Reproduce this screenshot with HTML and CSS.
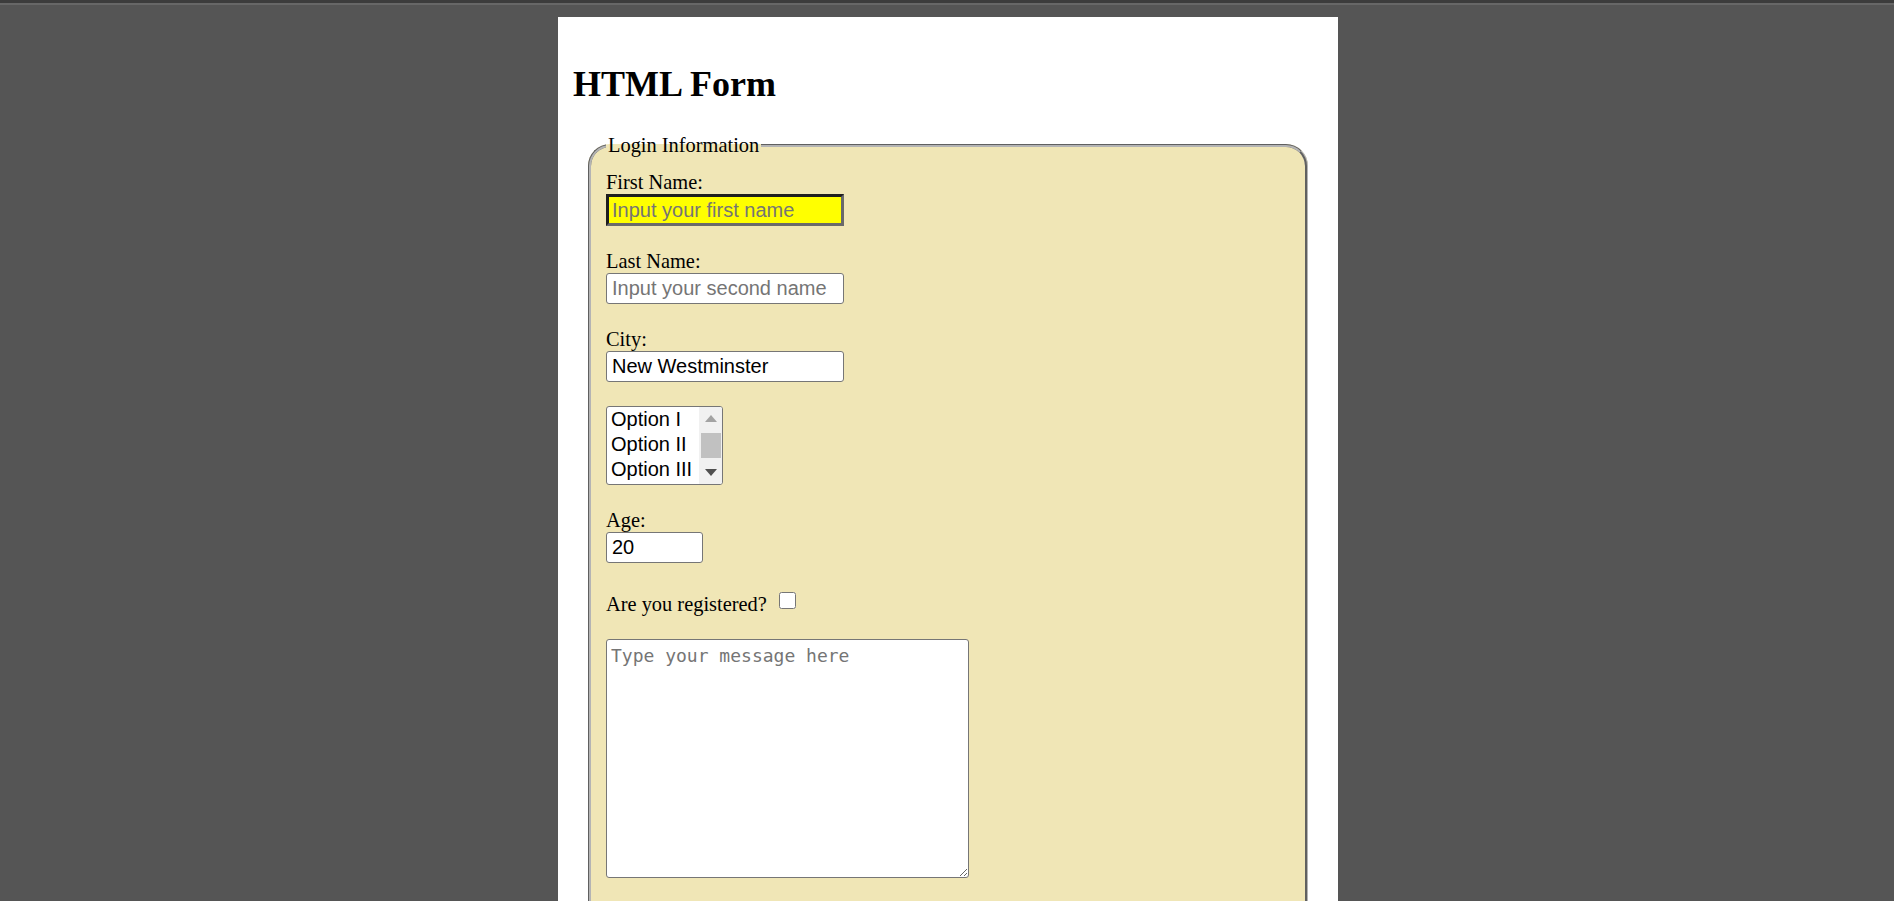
FILE: index.html
```html
<!DOCTYPE html>
<html lang="en">
<head>
<meta charset="utf-8">
<title>HTML Form</title>
<link rel="stylesheet" href="styles.css">
</head>
<body>
<div class="topbar"></div>
<main class="page">
  <h1 class="title">HTML Form</h1>
  <form class="form">
    <fieldset class="login">
      <legend class="legend">Login Information</legend>
      <div class="field">
        <label class="label" for="first">First Name:</label>
        <input class="text text-first" id="first" type="text" placeholder="Input your first name">
      </div>
      <div class="field">
        <label class="label" for="last">Last Name:</label>
        <input class="text" id="last" type="text" placeholder="Input your second name">
      </div>
      <div class="field">
        <label class="label" for="city">City:</label>
        <input class="text" id="city" type="text" value="New Westminster">
      </div>
      <div class="field">
        <div class="listbox" role="listbox" aria-label="Options">
          <div class="listbox-options">
            <div class="listbox-option" role="option">Option I</div>
            <div class="listbox-option" role="option">Option II</div>
            <div class="listbox-option" role="option">Option III</div>
          </div>
          <div class="scrollbar" aria-hidden="true">
            <div class="sb-btn">
              <svg class="sb-arrow" width="12" height="7" viewBox="0 0 12 7"><polygon points="0,7 12,7 6,0" fill="#a3a3a3"/></svg>
            </div>
            <div class="sb-track"><div class="sb-thumb"></div></div>
            <div class="sb-btn">
              <svg class="sb-arrow" width="12" height="7" viewBox="0 0 12 7"><polygon points="0,0 12,0 6,7" fill="#505050"/></svg>
            </div>
          </div>
        </div>
      </div>
      <div class="field">
        <label class="label" for="age">Age:</label>
        <input class="text text-age" id="age" type="number" value="20">
      </div>
      <div class="field field-check">
        <label class="label label-inline" for="reg">Are you registered?</label>
        <input class="check" id="reg" type="checkbox">
      </div>
      <div class="field">
        <textarea class="message" placeholder="Type your message here"></textarea>
      </div>
    </fieldset>
  </form>
</main>
</body>
</html>
```

FILE: styles.css
```css
html, body {
  margin: 0;
  padding: 0;
  background: #555555;
  height: 100%;
  overflow: hidden;
}

body {
  font-family: "Liberation Serif", "Times New Roman", serif;
  font-size: 20.4px;
  color: #000;
}

.topbar {
  height: 3px;
  background: #3c3c3c;
  border-bottom: 2px solid #676767;
}

.page {
  width: 780px;
  box-sizing: border-box;
  margin: 12px 0 0 calc(50% - 389px);
  background: #ffffff;
  padding: 14px 15px 40px;
  min-height: 900px;
}

.title {
  font-size: 36px;
  font-weight: bold;
  margin: 0 0 27px;
  padding-top: 30px;
  line-height: 46px;
}

.form {
  margin: 0;
}

.login {
  margin: 0 15px;
  padding: 14px 15px 40px;
  border: 3px groove #b4b4b4;
  border-radius: 22px;
  background: #f0e6b6;
}

.legend {
  padding: 0 2px;
  line-height: 23px;
}

.field {
  display: flex;
  flex-direction: column;
  align-items: flex-start;
  margin-bottom: 24px;
}

.label {
  display: block;
  line-height: 23px;
}

.text {
  box-sizing: border-box;
  width: 238px;
  height: 31px;
  padding: 1px 5px;
  font-family: "Liberation Sans", Arial, sans-serif;
  font-size: 20px;
  color: #000;
  background: #fff;
  border: 1px solid #767676;
  border-radius: 3px;
  outline: none;
}

.text::placeholder {
  color: #757575;
}

.text-first {
  background: #ffff00;
  border-width: 3px;
  border-style: solid;
  border-color: #1e1e1e #6a6a6a #6a6a6a #1e1e1e;
  border-radius: 0;
  height: 32px;
  padding: 1px 3px;
}

.text-age {
  width: 97px;
}

.text-age::-webkit-inner-spin-button,
.text-age::-webkit-outer-spin-button {
  -webkit-appearance: none;
  margin: 0;
}

.listbox {
  box-sizing: border-box;
  width: 117px;
  height: 79px;
  display: flex;
  border: 1px solid #767676;
  border-radius: 3px;
  background: #fff;
  overflow: hidden;
  font-family: "Liberation Sans", Arial, sans-serif;
  font-size: 20px;
  color: #000;
}

.listbox-options {
  flex: 1;
  padding-left: 4px;
  overflow: hidden;
}

.listbox-option {
  line-height: 25px;
  white-space: nowrap;
}

.scrollbar {
  width: 23px;
  display: flex;
  flex-direction: column;
  background: #f1f1f1;
}

.sb-btn {
  height: 23px;
  display: flex;
  align-items: center;
  justify-content: center;
}

.sb-track {
  flex: 1;
  padding: 3px 1px 0 2px;
}

.sb-thumb {
  height: 25px;
  background: #c1c1c1;
}

.field-check {
  flex-direction: row;
  align-items: flex-end;
  margin-top: 29px;
  margin-bottom: 23px;
}

.label-inline {
  display: inline;
}

.check {
  width: 17px;
  height: 17px;
  margin: 0 0 7px 12px;
}

.message {
  box-sizing: border-box;
  width: 363px;
  height: 239px;
  padding: 5px 4px;
  font-family: "DejaVu Sans Mono", "Liberation Mono", monospace;
  font-size: 18px;
  border: 1px solid #767676;
  border-radius: 3px;
  background: #fff;
  resize: both;
}

.message::placeholder {
  color: #757575;
}
```
